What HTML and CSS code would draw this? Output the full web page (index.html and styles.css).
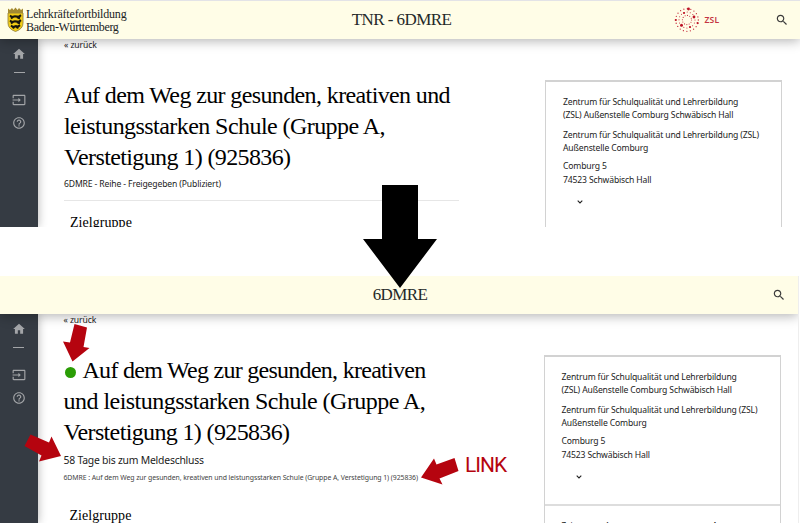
FILE: index.html
```html
<!DOCTYPE html>
<html lang="de">
<head>
<meta charset="utf-8">
<title>6DMRE</title>
<link rel="stylesheet" href="styles.css">
</head>
<body>
<svg class="defs" width="0" height="0" aria-hidden="true">
  <symbol id="home" viewBox="0 0 24 24"><path d="M10 20v-6h4v6h5v-8h3L12 3 2 12h3v8z"/></symbol>
  <symbol id="login" viewBox="0 0 24 24"><path d="M21 3.01H3c-1.1 0-2 .9-2 2V9h2V4.99h18v14.03H3V15H1v4.01c0 1.1.9 1.98 2 1.98h18c1.1 0 2-.88 2-1.98v-14c0-1.11-.9-2-2-2zM11 16l4-4-4-4v3H1v2h10v3z"/></symbol>
  <symbol id="help" viewBox="0 0 24 24"><path d="M11 18h2v-2h-2v2zm1-16C6.48 2 2 6.48 2 12s4.48 10 10 10 10-4.48 10-10S17.520 2 12 2zm0 18c-4.410 0-8-3.590-8-8s3.590-8 8-8 8 3.590 8 8-3.590 8-8 8zm0-14c-2.210 0-4 1.790-4 4h2c0-1.100.9-2 2-2s2 .9 2 2c0 2-3 1.750-3 5h2c0-2.250 3-2.500 3-5 0-2.210-1.790-4-4-4z"/></symbol>
  <symbol id="search" viewBox="0 0 24 24"><path d="M15.500 14h-.79l-.28-.27C15.410 12.590 16 11.110 16 9.500 16 5.910 13.090 3 9.500 3S3 5.910 3 9.500 5.910 16 9.500 16c1.610 0 3.090-.59 4.230-1.570l.27.28v.79l5 4.990L20.490 19l-4.990-5zm-6 0C7.010 14 5 11.990 5 9.500S7.010 5 9.500 5 14 7.010 14 9.500 11.990 14 9.500 14z"/></symbol>
  <symbol id="chevron" viewBox="0 0 6 4"><path d="M.7.7 3 2.900 5.300.7" fill="none" stroke="#222" stroke-width="1.100"/></symbol>
</svg>

<section class="frame before">
  <header class="bar">
    <div class="brand">
      <svg class="crest" viewBox="0 0 17 25">
        <path d="M1 1.500 3 3l2-2 1.500 2 2-2.500 2 2.500L12 1l2 2 2-1.500V7H1z" fill="#a58b30"/>
        <path d="M1 6h15v10q0 6-7.500 8.500Q1 22 1 16z" fill="#f3cd14" stroke="#9a8740" stroke-width=".9"/>
        <g fill="none" stroke="#17150c" stroke-width="2.100"><path d="M3 8.500 5 10l3-.8 4 .5 2-1.500M4 11.500l2-1.500M10 10l3 1.500"/><path d="M3 13.500 5 15l3-.8 4 .5 2-1.500M4 16.500 6 15M10 15l3 1.500"/><path d="M4 18.500 6 20l3-.8 2 .5 2-1.500M6 21.500l1-1.500M9.500 20l2 1"/></g>
      </svg>
      <div class="brand-name"><span class="b1">Lehrkräftefortbildung</span><span class="b2">Baden-Württemberg</span></div>
    </div>
    <div class="bar-title t1">TNR - 6DMRE</div>
    <div class="bar-end">
      <div class="zsl">
        <svg viewBox="-13 -13 26 26" fill="none" stroke="#c4283a" stroke-linecap="round">
          <circle r="11.300" stroke-width="1.300" stroke-dasharray="0 3.550"/>
          <circle r="8" stroke-width="1.100" stroke-dasharray="0 3.140"/>
          <circle r="4.600" stroke-width="1.100" stroke-dasharray="0 2.400"/>
          <g fill="#bd1226" stroke="none"><circle cx="1.500" cy="-11" r="1.400"/><circle cx="7" cy="-3" r="1.400"/><circle cx="-5.500" cy="5.300" r="1.500"/><circle cx="-11.200" cy="0" r="1.100"/><circle cx="10.600" cy="3" r="1.100"/><circle cx="-3" cy="-7" r="1.100"/><circle cx="3" cy="7" r="1.100"/></g>
        </svg>
        <span>ZSL</span>
      </div>
      <svg class="search"><use href="#search"/></svg>
    </div>
  </header>
  <div class="body">
    <nav class="side"><svg><use href="#home"/></svg><i></i><svg><use href="#login"/></svg><svg><use href="#help"/></svg></nav>
    <main class="main">
      <a class="back">« zurück</a>
      <h1><span class="l1">Auf dem Weg zur gesunden, kreativen und</span><span class="l2">leistungsstarken Schule (Gruppe A,</span><span class="l3">Verstetigung 1) (925836)</span></h1>
      <p class="meta">6DMRE - Reihe - Freigegeben (Publiziert)</p>
      <h2>Zielgruppe</h2>
    </main>
    <aside class="card">
      <div class="contact">
        <p><span>Zentrum für Schulqualität und Lehrerbildung</span><span>(ZSL) Außenstelle Comburg Schwäbisch Hall</span></p>
        <p><span>Zentrum für Schulqualität und Lehrerbildung (ZSL)</span><span>Außenstelle Comburg</span></p>
        <p class="address"><span>Comburg 5</span><span>74523 Schwäbisch Hall</span></p>
        <svg class="chev"><use href="#chevron"/></svg>
      </div>
    </aside>
  </div>
</section>

<section class="frame after">
  <header class="bar">
    <div class="brand"></div>
    <div class="bar-title t2">6DMRE</div>
    <div class="bar-end"><svg class="search"><use href="#search"/></svg></div>
  </header>
  <div class="body">
    <nav class="side"><svg><use href="#home"/></svg><i></i><svg><use href="#login"/></svg><svg><use href="#help"/></svg></nav>
    <main class="main">
      <a class="back">« zurück</a>
      <h1><span class="m1"><b class="dot"></b>Auf dem Weg zur gesunden, kreativen</span><span class="m2">und leistungsstarken Schule (Gruppe A,</span><span class="m3">Verstetigung 1) (925836)</span></h1>
      <p class="deadline">58 Tage bis zum Meldeschluss</p>
      <p class="path">6DMRE : Auf dem Weg zur gesunden, kreativen und leistungsstarken Schule (Gruppe A, Verstetigung 1) (925836)</p>
      <h2>Zielgruppe</h2>
    </main>
    <aside class="card">
      <div class="contact">
        <p><span>Zentrum für Schulqualität und Lehrerbildung</span><span>(ZSL) Außenstelle Comburg Schwäbisch Hall</span></p>
        <p><span>Zentrum für Schulqualität und Lehrerbildung (ZSL)</span><span>Außenstelle Comburg</span></p>
        <p class="address"><span>Comburg 5</span><span>74523 Schwäbisch Hall</span></p>
        <svg class="chev"><use href="#chevron"/></svg>
      </div>
      <div class="dates"><span>Zeitraum:</span><b>Mi 13.10.2021</b><b class="time">14:30 Uhr</b></div>
    </aside>
  </div>
</section>

<svg class="notes" viewBox="0 0 800 523">
  <path d="M382 185h36v54h19l-37 49-37-49h19z"/>
  <g fill="#b5040f">
    <path d="M74.500 324 87 327.500 83.500 347 89.500 348 72.500 361.500 63 341.500 70 342.500z"/>
    <path d="M30.500 434.500 49 442.500 51.500 436.500 61 456 39 461.500 41.500 455.500 24.500 446z"/>
    <path d="M454.500 458 458.500 471 439.500 478.500 442.500 484.500 421 477.500 434 458.500 436.500 464.500z"/>
  </g>
</svg>
<div class="link-note">LINK</div>
</body>
</html>
```
FILE: styles.css
```css
* { box-sizing: border-box; }
body { margin: 0; width: 800px; height: 523px; overflow: hidden; position: relative; background: #fff; color: #222; font: 8.6px/13.3px "Noto Sans", sans-serif; }
p, h1, h2 { margin: 0; font-weight: 400; }
.defs { display: none; }
h1 span, p span, .brand-name span { display: block; white-space: nowrap; }
.frame { overflow: hidden; display: flex; flex-direction: column; }
.before { height: 226.5px; border-top: 1px solid #e3e3e7; }
.after { height: 247px; margin-top: 49.5px; width: 799px; border-right: 1px solid #eee; }
.bar { flex: none; height: 37.8px; background: #fffde7; box-shadow: 0 2px 11px rgba(0,0,0,.3); display: grid; grid-template-columns: 200px 1fr 200px; align-items: center; position: relative; z-index: 1; font-family: "Liberation Serif", serif; }
.brand { display: flex; padding-left: 7px; gap: 2px; align-items: center; }
.crest { width: 17px; height: 25px; }
.brand-name { font-size: 12px; line-height: 13px; color: #20231f; padding-top: 2px; }
.b1 { letter-spacing: -.2px; }
.b2 { letter-spacing: -.35px; }
.bar-title { text-align: center; font-size: 17px; line-height: 20px; color: #242929; padding-left: 3px; }
.t1 { letter-spacing: -.55px; }
.t2 { letter-spacing: -.6px; padding-left: 2px; }
.bar-end { display: flex; justify-content: flex-end; align-items: center; padding-right: 12px; gap: 55px; }
.before .bar-end { padding-right: 11.5px; }
.zsl { display: flex; align-items: center; gap: 4px; color: #c43443; font: 600 8.5px/12px "Noto Sans", sans-serif; letter-spacing: .3px; }
.zsl svg { width: 26px; height: 26px; }
.search { width: 14px; height: 14px; fill: #3b3b3b; }
.body { flex: 1; display: flex; min-height: 0; }
.side { width: 38px; flex: none; background: #353b43; box-shadow: 0 0 9px rgba(0,0,0,.3); display: flex; flex-direction: column; align-items: center; padding-top: 8px; fill: #a3a5a8; }
.side svg { width: 14px; height: 14px; flex: none; }
.side i { width: 11px; height: 1px; background: #a3a5a8; margin: 11px 0 20px; }
.side i + svg { margin-bottom: 9px; }
.main { width: 395px; margin-left: 26px; flex: none; }
.back { display: block; white-space: nowrap; color: #222; letter-spacing: -.1px; }
h1 { font: 24px/31px "Liberation Serif", serif; color: #000; margin-top: 28px; }
.l1 { letter-spacing: -.62px; }
.l2 { letter-spacing: -.56px; }
.l3 { letter-spacing: -.62px; }
.m1 { letter-spacing: -.72px; }
.m2 { letter-spacing: -.53px; }
.m3 { letter-spacing: -.64px; }
.meta { margin-top: 4.5px; white-space: nowrap; letter-spacing: -.13px; padding-bottom: 9px; border-bottom: 1px solid #e6e6e6; }
h2 { font: 14px/18px "Liberation Serif", serif; color: #000; margin: 13px 0 0 6px; letter-spacing: .05px; }
.card { width: 237px; margin: 41px 0 0 86px; flex: none; border: 1px solid #d2d2d2; border-top-width: 2px; border-bottom: 0; }
.contact { padding: 14px 0 0 17px; height: 147px; }
.contact p { margin-bottom: 6.5px; white-space: nowrap; }
.contact p + p { margin-bottom: 3.5px; }
.contact .address { line-height: 14px; }
.contact span { letter-spacing: -.15px; }
.chev { display: block; width: 6px; height: 4px; margin: 13.5px 0 0 14px; }
.after .side { width: 37.5px; }
.after .card { margin-left: 85px; }
.dates { border-top: 2px solid #ddd; padding: 13px 0 0 17px; white-space: nowrap; display: flex; gap: 2px; font-size: 8px; letter-spacing: -.1px; }
.time { margin-left: 33px; }
.dot { display: inline-block; width: 11px; height: 11px; border-radius: 50%; background: #2a9d05; margin: 0 7px 1px 1px; vertical-align: middle; }
.deadline { font-size: 10.4px; line-height: 16px; margin-top: 3.5px; white-space: nowrap; letter-spacing: -.22px; }
.path { font-size: 6.9px; line-height: 11px; margin-top: 4px; white-space: nowrap; color: #444; letter-spacing: -.075px; }
.after h2 { margin-top: 24px; }
.notes { position: absolute; z-index: 2; left: 0; top: 0; width: 800px; height: 523px; }
.link-note { position: absolute; z-index: 2; left: 465px; top: 453px; font: 21px/24px Roboto, sans-serif; color: #b5040f; letter-spacing: -1px; }
```
